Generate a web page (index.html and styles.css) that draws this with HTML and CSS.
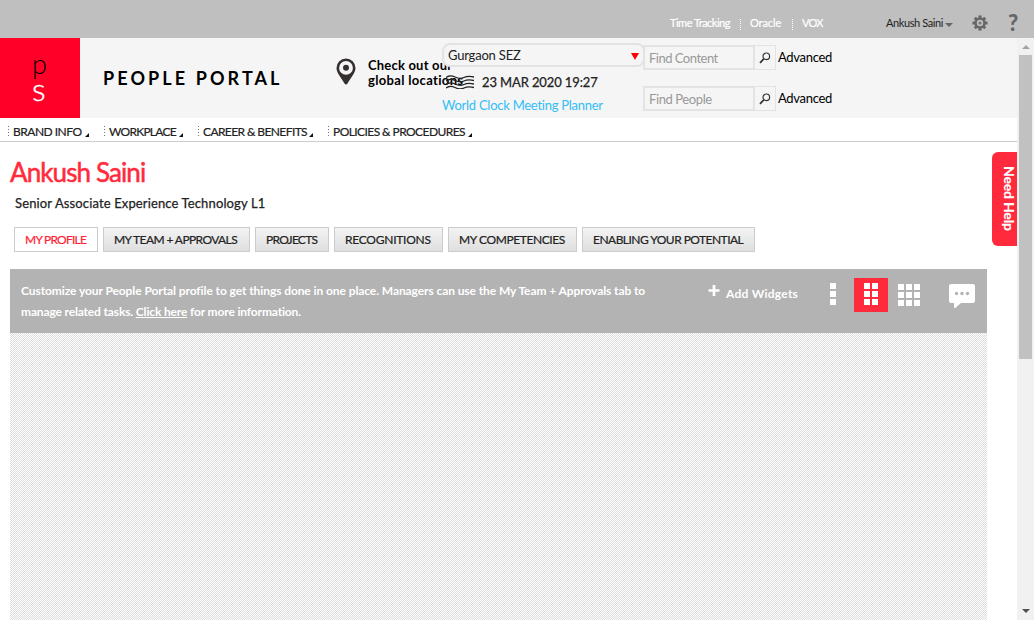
FILE: index.html
```html
<!DOCTYPE html>
<html lang="en">
<head>
<meta charset="utf-8">
<title>People Portal</title>
<link rel="stylesheet" href="styles.css">
</head>
<body>
<div class="topbar">
  <nav class="toplinks"><a class="tl-time">Time Tracking</a><a class="tl-oracle">Oracle</a><a class="tl-vox">VOX</a></nav>
  <div class="user"><span>Ankush Saini</span><i class="caret"></i></div>
  <svg class="gear" width="16" height="16" viewBox="0 0 16 16"><g fill="#666"><circle cx="8" cy="8" r="5.7"/><rect x="6.5" y="0.4" width="3" height="15.2"/><rect x="0.4" y="6.5" width="15.2" height="3"/><g transform="rotate(45 8 8)"><rect x="6.5" y="0.6" width="3" height="14.8"/><rect x="0.6" y="6.5" width="14.8" height="3"/></g></g><circle cx="8" cy="8" r="3.2" fill="#bfbfbf"/><circle cx="8" cy="8" r="1.6" fill="#777"/></svg>
  <span class="help">?</span>
</div>
<div class="viewport">
  <div class="page">
    <header class="header">
      <div class="logo"><span class="logo-p">p</span><span class="logo-s">s</span></div>
      <div class="brand">PEOPLE PORTAL</div>
      <svg class="pin" width="20" height="28" viewBox="0 0 20 28"><path fill="#352f30" fill-rule="evenodd" d="M10 0.5A9.5 9.5 0 0 0 .5 10C.5 15 5.500 20 8.500 25.500Q10 27.500 11.500 25.500C14.500 20 19.500 15 19.500 10A9.500 9.500 0 0 0 10 .5ZM10 3A6.900 6.900 0 1 1 10 16.800A6.900 6.900 0 0 1 10 3Z"/><circle cx="10" cy="9.800" r="3" fill="#352f30"/></svg>
      <div class="globe"><span class="g1">Check out our</span><span class="g2">global locations</span></div>
      <div class="clock">
        <div class="select"><span>Gurgaon SEZ</span><i class="down"></i></div>
        <div class="date"><svg width="28" height="14" viewBox="0 0 28 14" fill="none" stroke="#222" stroke-width="1.300"><path d="M0 2.500Q4-.5 9 2T18 2.500T28 2M0 6Q4 3 9 5.500T18 6T28 5.500M0 9.500Q4 6.500 9 9T18 9.500T28 9M0 13Q4 10 9 12.500T18 13T28 12.500"/></svg><span>23 MAR 2020 19:27</span></div>
        <a class="planner">World Clock Meeting Planner</a>
      </div>
      <div class="finders">
        <div class="finder"><div class="field f-content"><span>Find Content</span></div><div class="go"><svg width="12" height="12" viewBox="0 0 12 12" fill="none" stroke="#333"><circle cx="7.300" cy="4.300" r="3.300" stroke-width="1.200"/><path d="M5 6.700L1 10.800" stroke-width="1.700"/></svg></div><a>Advanced</a></div>
        <div class="finder"><div class="field f-people"><span>Find People</span></div><div class="go"><svg width="12" height="12" viewBox="0 0 12 12" fill="none" stroke="#333"><circle cx="7.300" cy="4.300" r="3.300" stroke-width="1.200"/><path d="M5 6.700L1 10.800" stroke-width="1.700"/></svg></div><a>Advanced</a></div>
      </div>
    </header>
    <nav class="menu">
      <a class="m1"><span>BRAND INFO</span><i></i></a>
      <a class="m2"><span>WORKPLACE</span><i></i></a>
      <a class="m3"><span>CAREER &amp; BENEFITS</span><i></i></a>
      <a class="m4"><span>POLICIES &amp; PROCEDURES</span><i></i></a>
    </nav>
    <main class="main">
      <h1>Ankush Saini</h1>
      <p class="role">Senior Associate Experience Technology L1</p>
      <div class="tabs">
        <a class="t1 active">MY PROFILE</a>
        <a class="t2">MY TEAM + APPROVALS</a>
        <a class="t3">PROJECTS</a>
        <a class="t4">RECOGNITIONS</a>
        <a class="t5">MY COMPETENCIES</a>
        <a class="t6">ENABLING YOUR POTENTIAL</a>
      </div>
      <section class="panel">
        <div class="banner">
          <div class="blurb"><span class="b1">Customize your People Portal profile to get things done in one place. Managers can use the My Team + Approvals tab to</span><span class="b2">manage related tasks. <u>Click here</u> for more information.</span></div>
          <div class="add"><svg width="12" height="12" viewBox="0 0 12 12"><path d="M6 0V11M.5 5.500H11.500" stroke="#fff" stroke-width="2.700"/></svg><span>Add Widgets</span></div>
          <div class="grid one"><i></i><i></i><i></i></div>
          <div class="grid two"><i></i><i></i><i></i><i></i><i></i><i></i></div>
          <div class="grid three"><i></i><i></i><i></i><i></i><i></i><i></i><i></i><i></i><i></i></div>
          <svg class="chat" width="26" height="25" viewBox="0 0 26 25"><path fill="#fff" d="M2 0H24Q26 0 26 2V17Q26 19 24 19H12L6.500 23.700Q5 24.500 5 23V19H2Q0 19 0 17V2Q0 0 2 0Z"/><g fill="#b3b3b3"><circle cx="7.500" cy="9.500" r="1.700"/><circle cx="13" cy="9.500" r="1.700"/><circle cx="18.500" cy="9.500" r="1.700"/></g></svg>
        </div>
        <div class="canvas"></div>
      </section>
    </main>
    <div class="needhelp"><span>Need Help</span></div>
  </div>
  <div class="scrollbar"><i class="up"></i><div class="thumb"></div><i class="dn"></i></div>
</div>
</body>
</html>
```

FILE: styles.css
```css
* { box-sizing: border-box; }
body { margin: 0; width: 1034px; height: 620px; overflow: hidden; display: flex; flex-direction: column; font: 13px/16px Lato, sans-serif; color: #222; background: #fff; }
span, a { white-space: nowrap; }
i { display: block; }

.topbar { height: 38px; flex: none; background: #bfbfbf; display: flex; padding-top: 15px; padding-left: 670px; font-size: 11px; }
.toplinks { display: flex; width: 216px; color: #fff; -webkit-text-stroke: 0.2px; }
.toplinks a + a { position: relative; }
.tl-time { width: 80px; letter-spacing: -0.5px; }
.tl-oracle { width: 52px; letter-spacing: -0.1px; }
.tl-vox { letter-spacing: -0.7px; }
.toplinks a + a::before { content: ""; position: absolute; left: -10px; top: 4px; height: 11px; border-left: 1px dotted #fff; }
.user { display: flex; width: 86px; letter-spacing: -0.4px; gap: 2px; }
.user span { width: 57px; }
.caret { margin-top: 8px; width: 0; height: 0; border: 4px solid transparent; border-top-color: #666; border-bottom: 0; }
.gear { flex: none; }
.help { margin-left: 20px; font: 900 22px/16px Lato, sans-serif; color: #666; }

.viewport { flex: 1; display: flex; min-height: 0; }
.page { width: 1017px; position: relative; overflow: hidden; display: flex; flex-direction: column; }
.header { height: 80px; flex: none; background: #f5f5f5; display: flex; }
.logo { width: 80px; background: #ff0028; padding-left: 32px; display: flex; flex-direction: column; font-weight: 300; }
.logo-p { font-size: 27px; line-height: 26px; color: #000; margin-top: 13px; }
.logo-s { font-size: 32px; line-height: 24px; color: #fff; -webkit-text-stroke: 0.4px; }
.brand { width: 256px; padding: 30px 0 0 23px; font: bold 18px/20px Lato, sans-serif; letter-spacing: 3.1px; color: #000; flex: none; }
.pin { margin-top: 20px; flex: none; }
.globe { width: 86px; padding: 20px 0 0 12px; display: flex; flex-direction: column; font: bold 13px/15px Lato, sans-serif; color: #000; flex: none; }
.g1 { letter-spacing: 0.2px; }
.g2 { letter-spacing: 0.33px; }
.clock { width: 201px; flex: none; padding-top: 5px; position: relative; }
.select { width: 203px; height: 24px; border: 2px solid #e3e3e3; border-radius: 8px; background: #f5f5f5; padding: 3px 4px; display: flex; justify-content: space-between; line-height: 15px; letter-spacing: -0.2px; }
.down { margin-top: 5px; width: 0; height: 0; border: 4px solid transparent; border-top: 7px solid #f00; border-bottom: 0; }
.date { display: flex; gap: 8px; padding: 6px 0 0 4px; line-height: 18px; letter-spacing: -0.12px; -webkit-text-stroke: 0.25px; }
.date svg { margin-top: 2px; }
.planner { display: block; margin-top: 6px; line-height: 16px; color: #33bdf5; letter-spacing: -0.26px; }
.finders { display: flex; flex-direction: column; gap: 16px; padding-top: 7px; }
.finder { display: flex; height: 25px; line-height: 24px; }
.finder a { margin-left: 2px; color: #000; letter-spacing: -0.3px; }
.field { width: 112px; border: 2px solid #e3e3e3; padding: 0 0 0 4px; color: #999; line-height: 22px; }
.f-content { letter-spacing: -0.5px; }
.f-people { letter-spacing: -0.4px; }
.go { width: 21px; border: 1px solid #e3e3e3; border-left: 0; padding: 6px 0 0 4px; line-height: 0; }

.menu { height: 24px; flex: none; border-bottom: 1px solid #ccc; display: flex; font-size: 12px; padding: 6px 0 0 8px; -webkit-text-stroke: 0.2px; }
.menu a { display: flex; background: repeating-linear-gradient(#777 0 1px, transparent 1px 3px) 0 2px / 1px 12px no-repeat; padding-left: 5px; gap: 2px; }
.menu i { margin-top: 9px; width: 0; height: 0; border-left: 4px solid transparent; border-bottom: 4px solid #111; }
.m1 { width: 96px; letter-spacing: -0.5px; }
.m2 { width: 94px; letter-spacing: -0.75px; }
.m3 { width: 130px; letter-spacing: -0.6px; }
.m4 { letter-spacing: -0.57px; }
.m1 span { width: 70px; }
.m2 span { width: 68px; }
.m3 span { width: 104px; }
.m4 span { width: 133px; }

.main { flex: 1; display: flex; flex-direction: column; padding-left: 10px; min-height: 0; }
h1 { margin: 14px 0 0; font: 400 26px/32px Lato, sans-serif; color: #ff2a3c; letter-spacing: -0.9px; -webkit-text-stroke: 0.5px; }
.role { margin: 7px 0 0 5px; font-size: 13px; line-height: 17px; letter-spacing: 0.13px; -webkit-text-stroke: 0.25px; }
.tabs { display: flex; gap: 5px; margin: 15px 0 0 4px; height: 25px; -webkit-text-stroke: 0.2px; }
.tabs a { border: 1px solid #ccc; background: linear-gradient(#f3f3f3, #dfdfdf); line-height: 24px; font-size: 12px; padding-left: 10px; }
.tabs .active { background: #fff; color: #ff1e37; }
.t1 { width: 84px; letter-spacing: -0.75px; }
.t2 { width: 147px; letter-spacing: -0.6px; }
.t3 { width: 74px; letter-spacing: -0.75px; }
.t4 { width: 109px; letter-spacing: -0.25px; }
.t5 { width: 129px; letter-spacing: -0.4px; }
.t6 { width: 173px; letter-spacing: -0.53px; }
.panel { width: 977px; margin-top: 17px; flex: 1; display: flex; flex-direction: column; }
.banner { height: 64px; background: #b3b3b3; color: #fff; display: flex; font-weight: bold; flex: none; }
.blurb { width: 698px; padding: 11px 0 0 11px; display: flex; flex-direction: column; font-size: 12px; line-height: 21px; flex: none; }
.b1 { letter-spacing: -0.085px; }
.b2 { letter-spacing: -0.15px; }
.add { width: 112px; display: flex; gap: 6px; padding-top: 16px; font-size: 12px; line-height: 18px; letter-spacing: 0.25px; flex: none; }
.grid { display: grid; gap: 2px; height: 34px; margin-top: 9px; padding-top: 5px; align-content: start; flex: none; }
.grid i { width: 6px; height: 6px; background: #fff; }
.one { width: 34px; padding-left: 10px; }
.two { width: 34px; background: #ff2a3c; grid-template-columns: 6px 6px; justify-content: center; }
.three { width: 61px; padding-left: 10px; margin-top: 10px; grid-template-columns: 6px 6px 6px; }
.chat { margin-top: 15px; flex: none; }
.canvas { flex: 1; background: repeating-conic-gradient(#fff 0 25%, #dcdcdc 0 50%) 0 0 / 2px 2px; }

.needhelp { position: absolute; right: 0; top: 114px; width: 25px; height: 94px; background: #ff2a3c; border-radius: 6px 0 0 6px; color: #fff; }
.needhelp span { display: block; writing-mode: vertical-rl; font: 900 14px/18px Lato, sans-serif; letter-spacing: -0.2px; margin: 14px 0 0 8px; }
.scrollbar { width: 17px; background: #f1f1f1; display: flex; flex-direction: column; align-items: center; }
.scrollbar i { width: 0; height: 0; border: 4px solid transparent; }
.scrollbar .up { margin-top: 3px; border-bottom-color: #a3a3a3; }
.thumb { width: 13px; height: 304px; background: #c1c1c1; margin-top: 6px; }
.scrollbar .dn { margin-top: auto; margin-bottom: 3px; border-top-color: #505050; }
```
